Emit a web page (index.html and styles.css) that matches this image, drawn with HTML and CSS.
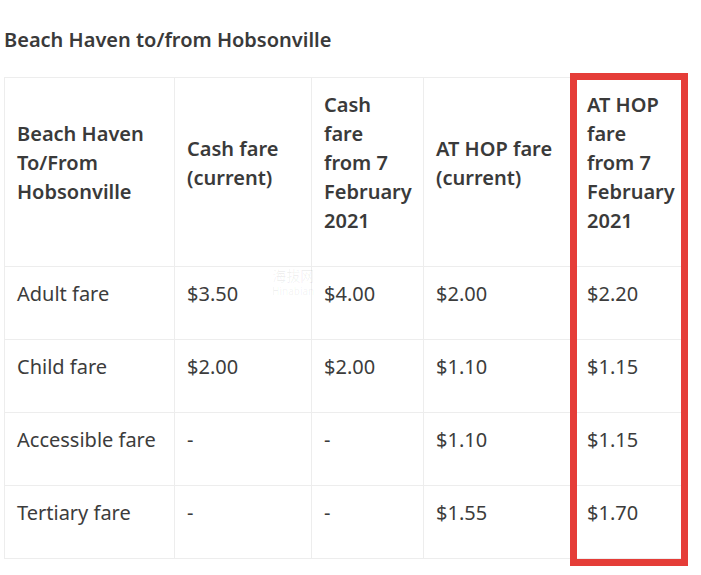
FILE: index.html
```html
<!DOCTYPE html>
<html lang="en">
<head>
<meta charset="utf-8">
<title>Beach Haven to/from Hobsonville</title>
<link rel="stylesheet" href="styles.css">
</head>
<body>
<div class="page">
  <h2 class="title">Beach Haven to/from Hobsonville</h2>
  <div class="table-wrap">
    <table class="fares">
      <colgroup>
        <col class="c1"><col class="c2"><col class="c3"><col class="c4"><col class="c5">
      </colgroup>
      <thead>
        <tr>
          <th>Beach Haven To/From Hobsonville</th>
          <th>Cash fare (current)</th>
          <th>Cash fare from 7 February 2021</th>
          <th>AT HOP fare (current)</th>
          <th>AT HOP fare from 7 February 2021</th>
        </tr>
      </thead>
      <tbody>
        <tr><td>Adult fare</td><td>$3.50</td><td>$4.00</td><td>$2.00</td><td>$2.20</td></tr>
        <tr><td>Child fare</td><td>$2.00</td><td>$2.00</td><td>$1.10</td><td>$1.15</td></tr>
        <tr><td>Accessible fare</td><td>-</td><td>-</td><td>$1.10</td><td>$1.15</td></tr>
        <tr><td>Tertiary fare</td><td>-</td><td>-</td><td>$1.55</td><td>$1.70</td></tr>
      </tbody>
    </table>
    <div class="highlight"></div>
    <div class="watermark"><span class="wm-cn">海拔网</span><span class="wm-en">Hinabian</span></div>
  </div>
</div>
</body>
</html>
```
FILE: styles.css
```css
html, body {
  margin: 0;
  padding: 0;
  background: #ffffff;
}
body {
  font-family: "Noto Sans", "Open Sans", sans-serif;
  color: #363636;
  min-height: 575px;
}
.page {
  padding: 0 4px 12px;
}
.title {
  margin: 0;
  padding-top: 26px;
  font-size: 20px;
  line-height: 28px;
  font-weight: 600;
  color: #3a3a3a;
}
.table-wrap {
  position: relative;
  margin-top: 23px;
}
.fares {
  border-collapse: collapse;
  table-layout: fixed;
  width: 683px;
}
.c1 { width: 170px; }
.c2 { width: 137px; }
.c3 { width: 112px; }
.c4 { width: 151px; }
.c5 { width: 113px; }
.fares th,
.fares td {
  border: 1px solid #ededed;
  padding: 12px 12px 31px 12px;
  vertical-align: middle;
  text-align: left;
  font-size: 20px;
  line-height: 29px;
}
.fares th {
  font-weight: 600;
  color: #3a3a3a;
}
.fares td {
  font-weight: 400;
  color: #3c3c3c;
}
.highlight {
  position: absolute;
  left: 566px;
  top: -4px;
  width: 104px;
  height: 479px;
  border: 7px solid #e53d38;
}
.watermark {
  position: absolute;
  left: 268px;
  top: 190px;
  display: flex;
  flex-direction: column;
  align-items: center;
  gap: 2px;
  color: rgba(0, 0, 0, 0.06);
  pointer-events: none;
}
.wm-cn {
  font-family: "Noto Sans CJK SC", sans-serif;
  font-size: 14px;
  line-height: 16px;
}
.wm-en {
  font-size: 10px;
  line-height: 12px;
}
```
